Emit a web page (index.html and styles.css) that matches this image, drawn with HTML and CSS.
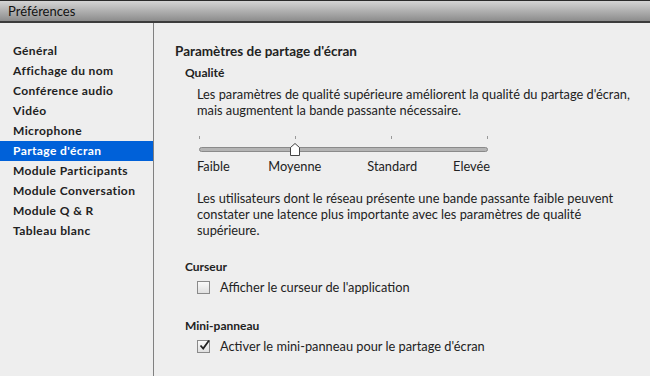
FILE: index.html
```html
<!DOCTYPE html>
<html lang="fr">
<head>
    <meta charset="UTF-8">
    <title>Préférences</title>
    <link rel="stylesheet" href="styles.css">
</head>
<body>
    <header class="titlebar">Préférences</header>

    <div class="window">
        <ul class="sidebar">
            <li>Général</li>
            <li>Affichage du nom</li>
            <li>Conférence audio</li>
            <li>Vidéo</li>
            <li>Microphone</li>
            <li class="active">Partage d'écran</li>
            <li>Module Participants</li>
            <li>Module Conversation</li>
            <li>Module Q &amp; R</li>
            <li>Tableau blanc</li>
        </ul>

        <main class="content">
            <h1>Paramètres de partage d'écran</h1>

            <h2>Qualité</h2>
            <p class="text">Les paramètres de qualité supérieure améliorent la qualité du partage d'écran,<br>mais augmentent la bande passante nécessaire.</p>

            <div class="slider">
                <div class="ticks">
                    <span></span><span></span><span></span><span></span>
                </div>
                <div class="track">
                    <svg class="thumb" width="10" height="13" viewBox="0 0 10 13">
                        <path d="M0.5 4.5 L5 0.5 L9.5 4.5 L9.5 12.5 L0.5 12.5 Z" fill="#fff" stroke="#444"/>
                    </svg>
                </div>
                <div class="labels">
                    <span>Faible</span>
                    <span>Moyenne</span>
                    <span>Standard</span>
                    <span>Elevée</span>
                </div>
            </div>

            <p class="text notice">Les utilisateurs dont le réseau présente une bande passante faible peuvent<br>constater une latence plus importante avec les paramètres de qualité<br>supérieure.</p>

            <h2 class="section">Curseur</h2>
            <label class="check">
                <span class="box"></span>
                Afficher le curseur de l'application
            </label>

            <h2 class="section">Mini-panneau</h2>
            <label class="check">
                <span class="box">
                    <svg width="13" height="13" viewBox="0 0 13 13"><path d="M2.5 6.5 L5.2 9.5 L11 1.5" fill="none" stroke="#222" stroke-width="1.8"/></svg>
                </span>
                Activer le mini-panneau pour le partage d'écran
            </label>
        </main>
    </div>
</body>
</html>
```

FILE: styles.css
```css
body {
    margin: 0;
    background-color: #eeeeee;
    font-family: Lato, "Liberation Sans", sans-serif;
    font-size: 12.8px;
    color: #222;
    height: 376px;
    overflow: hidden;
}
.titlebar {
    height: 20px;
    line-height: 20px;
    padding-left: 8px;
    border-top: 1px solid #2a2a2a;
    border-bottom: 2px solid #3c3c3c;
    background: linear-gradient(#d4d4d4, #8c8c8c);
    font-size: 13px;
    color: #111;
}
.window {
    display: flex;
    height: 353px;
}
.sidebar {
    list-style: none;
    margin: 0;
    padding: 18px 0 0 0;
    width: 153px;
    flex-shrink: 0;
    border-right: 1px solid #808080;
}
.sidebar li {
    height: 20px;
    line-height: 20px;
    padding-left: 13px;
    font-size: 12px;
    font-weight: bold;
    letter-spacing: 0.4px;
    color: #222;
}
.sidebar li.active {
    background-color: #0061d9;
    color: #fff;
}
.content {
    flex: 1;
    min-width: 0;
    padding: 18px 0 0 21px;
}
h1 {
    margin: 0;
    height: 20px;
    line-height: 20px;
    font-size: 13.5px;
    font-weight: bold;
}
h2 {
    margin: 3px 0 0 10px;
    height: 18px;
    line-height: 18px;
    font-size: 12px;
    font-weight: bold;
}
h2.section {
    margin-top: 20px;
}
.text {
    margin: 4px 0 0 22px;
    width: 450px;
    line-height: 16px;
    white-space: nowrap;
}
.slider {
    margin: 18px 0 0 24px;
    width: 289px;
}
.ticks {
    display: flex;
    justify-content: space-between;
    height: 4px;
}
.ticks span {
    width: 1px;
    height: 3px;
    background-color: #999;
}
.track {
    position: relative;
    margin-top: 7px;
    height: 3px;
    border: 1px solid #8a8a8a;
    border-radius: 3px;
    background-color: #b4b4b4;
}
.thumb {
    position: absolute;
    left: 90px;
    top: -5px;
}
.labels {
    display: flex;
    justify-content: space-between;
    margin-top: 6px;
    line-height: 16px;
}
.labels span {
    width: 1px;
    display: flex;
    justify-content: center;
    white-space: nowrap;
}
.labels span:first-child {
    justify-content: flex-start;
    margin-left: -2px;
}
.labels span:last-child {
    justify-content: flex-end;
    margin-right: -2px;
}
.notice {
    margin-top: 16px;
}
.check {
    display: flex;
    align-items: center;
    gap: 10px;
    margin: 1px 0 17px 22px;
    height: 20px;
}
.box {
    width: 11px;
    height: 11px;
    border: 1px solid #8a8a8a;
    background: linear-gradient(#fafafa, #e0e0e0);
    position: relative;
}
.box svg {
    position: absolute;
    left: 0;
    top: -2px;
}
```
